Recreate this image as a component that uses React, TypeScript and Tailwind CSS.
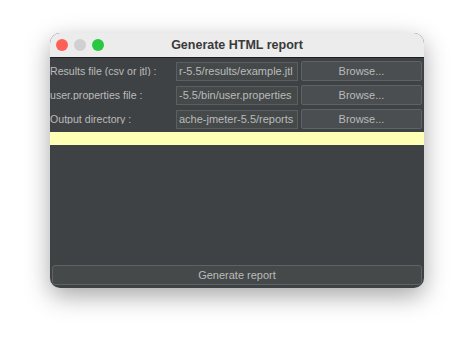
import React from "react";

const font = { fontFamily: '"Liberation Sans", Arial, sans-serif' };

function Row({ label, value }: { label: string; value: string }) {
  return (
    <div className="flex items-center h-[24px]">
      <div className="w-[126px] text-[10.6px] text-[#bbbbbb] whitespace-nowrap overflow-hidden leading-none">{label}</div>
      <div className="w-[122px] h-[19px] border border-[#5b5f61] bg-[#45494a] text-[11px] text-[#bbbbbb] leading-[17px] pl-[2px] overflow-hidden whitespace-nowrap">
        {value}
      </div>
      <div className="ml-[3px] w-[121px] h-[20px] border border-[#5e6365] rounded-[2px] bg-[#4a4e50] text-[11px] text-[#bbbbbb] flex items-center justify-center leading-none">
        Browse...
      </div>
    </div>
  );
}

export default function App() {
  return (
    <div className="w-[474px] h-[354px] bg-white overflow-hidden" style={font}>
      <div className="ml-[50px] mt-[33px] w-[374px] h-[255px] rounded-[10px] overflow-hidden shadow-[0_8px_24px_rgba(0,0,0,0.35)] flex flex-col bg-[#3f4244]">
        <div className="h-[25px] bg-[#ececec] border-b border-[#1e1e1e] flex items-center relative shrink-0">
          <div className="flex gap-[6px] pl-[6px]">
            <div className="w-[12px] h-[12px] rounded-full bg-[#fe5f57]" />
            <div className="w-[12px] h-[12px] rounded-full bg-[#d0d0d0]" />
            <div className="w-[12px] h-[12px] rounded-full bg-[#28c840]" />
          </div>
          <div className="absolute inset-0 flex items-center justify-center text-[12.5px] font-bold text-[#3a3a3a]">
            Generate HTML report
          </div>
        </div>
        <div className="flex flex-col pt-[1px] pr-[2px]">
          <Row label="Results file (csv or jtl) :" value="r-5.5/results/example.jtl" />
          <Row label="user.properties file :" value="-5.5/bin/user.properties" />
          <Row label="Output directory :" value="ache-jmeter-5.5/reports" />
        </div>
        <div className="mt-[1px] h-[13px] bg-[#ffffb5]" />
        <div className="flex-1" />
        <div className="px-[2px] pb-[3px]">
          <div className="h-[20px] border border-[#5e6365] rounded-[3px] bg-[#45494a] text-[11px] text-[#bbbbbb] flex items-center justify-center">
            Generate report
          </div>
        </div>
      </div>
    </div>
  );
}
